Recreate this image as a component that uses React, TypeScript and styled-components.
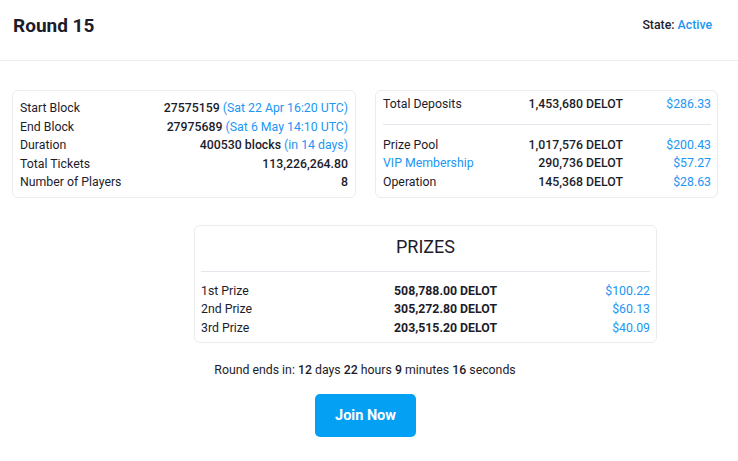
import React from "react";
import styled, { createGlobalStyle } from "styled-components";

const GlobalStyle = createGlobalStyle`
  body {
    margin: 0;
    background: #fff;
    font-family: Roboto, "Noto Sans", sans-serif;
    color: #1c1c2b;
  }
`;

const blue = "#2196f3";

const Page = styled.div`
  width: 738px;
  height: 461px;
  overflow: hidden;
`;

const Header = styled.div`
  height: 60px;
  display: flex;
  align-items: center;
  justify-content: space-between;
  padding: 0 26px 0 13px;
  border-bottom: 1px solid #ececec;
`;

const Title = styled.h1`
  margin: 0 0 10px;
  font-size: 19px;
  font-weight: 700;
`;

const State = styled.div`
  margin-bottom: 10px;
  font-size: 12.3px;
  font-weight: 500;
`;

const Blue = styled.span`
  color: ${blue};
`;

const Cards = styled.div`
  display: grid;
  grid-template-columns: 344px 343px;
  gap: 19px;
  padding: 29px 0 0 12px;
`;

const Card = styled.div<{ $pad?: string }>`
  border: 1px solid #ececec;
  border-radius: 6px;
  padding: ${(p) => p.$pad || "8px 7px 5px"};
  font-size: 12.3px;
`;

const InfoRow = styled.div`
  display: flex;
  justify-content: space-between;
  line-height: 18.5px;
`;

const Strong = styled.span`
  font-weight: 500;
`;

const MoneyRow = styled.div<{ $cols: string }>`
  display: grid;
  grid-template-columns: ${(p) => p.$cols};
  line-height: 18.5px;
  font-size: 12.3px;
`;

const Amount = styled.span<{ $bold?: boolean }>`
  text-align: right;
  font-weight: ${(p) => (p.$bold ? 700 : 500)};
`;

const Usd = styled.span`
  text-align: right;
  color: ${blue};
`;

const Label = styled.span<{ $link?: boolean }>`
  color: ${(p) => (p.$link ? blue : "inherit")};
`;

const Divider = styled.hr<{ $m: string }>`
  border: 0;
  border-top: 1px solid #e6e6ee;
  margin: ${(p) => p.$m};
`;

const PrizeCard = styled(Card)`
  width: 463px;
  box-sizing: border-box;
  margin: 27px 0 0 194px;
`;

const PrizeTitle = styled.div`
  text-align: center;
  font-size: 18px;
  line-height: 24px;
  margin-top: 3px;
`;

const Countdown = styled.div`
  text-align: center;
  font-size: 12.3px;
  margin-top: 19px;
  margin-left: -8px;
  line-height: 16px;
`;

const ButtonRow = styled.div`
  display: flex;
  justify-content: center;
  margin-top: 16px;
  margin-left: -7px;
`;

const JoinButton = styled.button`
  width: 101px;
  height: 43px;
  border: 0;
  border-radius: 5px;
  background: #03a0f4;
  color: #fff;
  font-family: Roboto, sans-serif;
  font-size: 14.5px;
  font-weight: 700;
  cursor: pointer;
`;

const infoRows: Array<[string, string, string?]> = [
  ["Start Block", "27575159", "(Sat 22 Apr 16:20 UTC)"],
  ["End Block", "27975689", "(Sat 6 May 14:10 UTC)"],
  ["Duration", "400530 blocks", "(in 14 days)"],
  ["Total Tickets", "113,226,264.80"],
  ["Number of Players", "8"],
];

const pool: Array<[string, string, string, boolean?]> = [
  ["Prize Pool", "1,017,576 DELOT", "$200.43"],
  ["VIP Membership", "290,736 DELOT", "$57.27", true],
  ["Operation", "145,368 DELOT", "$28.63"],
];

const prizes: Array<[string, string, string]> = [
  ["1st Prize", "508,788.00 DELOT", "$100.22"],
  ["2nd Prize", "305,272.80 DELOT", "$60.13"],
  ["3rd Prize", "203,515.20 DELOT", "$40.09"],
];

const poolCols = "1fr 120px 88px";
const prizeCols = "193px 103px 1fr";

export default function App() {
  return (
    <Page>
      <GlobalStyle />
      <Header>
        <Title>Round 15</Title>
        <State>
          State: <Blue>Active</Blue>
        </State>
      </Header>
      <Cards>
        <Card>
          {infoRows.map(([label, value, extra]) => (
            <InfoRow key={label}>
              <span>{label}</span>
              <span>
                <Strong>{value}</Strong>
                {extra && <Blue> {extra}</Blue>}
              </span>
            </InfoRow>
          ))}
        </Card>
        <Card $pad="4px 6px 5px 7px">
          <MoneyRow $cols={poolCols}>
            <Label>Total Deposits</Label>
            <Amount>1,453,680 DELOT</Amount>
            <Usd>$286.33</Usd>
          </MoneyRow>
          <Divider $m="10px 0 11px" />
          {pool.map(([label, amount, usd, link]) => (
            <MoneyRow key={label} $cols={poolCols}>
              <Label $link={link}>{label}</Label>
              <Amount>{amount}</Amount>
              <Usd>{usd}</Usd>
            </MoneyRow>
          ))}
        </Card>
      </Cards>
      <PrizeCard $pad="6px 6px 5px 6px">
        <PrizeTitle>PRIZES</PrizeTitle>
        <Divider $m="12px 0 10px" />
        {prizes.map(([label, amount, usd]) => (
          <MoneyRow key={label} $cols={prizeCols}>
            <Label>{label}</Label>
            <Amount $bold>{amount}</Amount>
            <Usd>{usd}</Usd>
          </MoneyRow>
        ))}
      </PrizeCard>
      <Countdown>
        Round ends in: <Strong>12</Strong> days <Strong>22</Strong> hours{" "}
        <Strong>9</Strong> minutes <Strong>16</Strong> seconds
      </Countdown>
      <ButtonRow>
        <JoinButton>Join Now</JoinButton>
      </ButtonRow>
    </Page>
  );
}
